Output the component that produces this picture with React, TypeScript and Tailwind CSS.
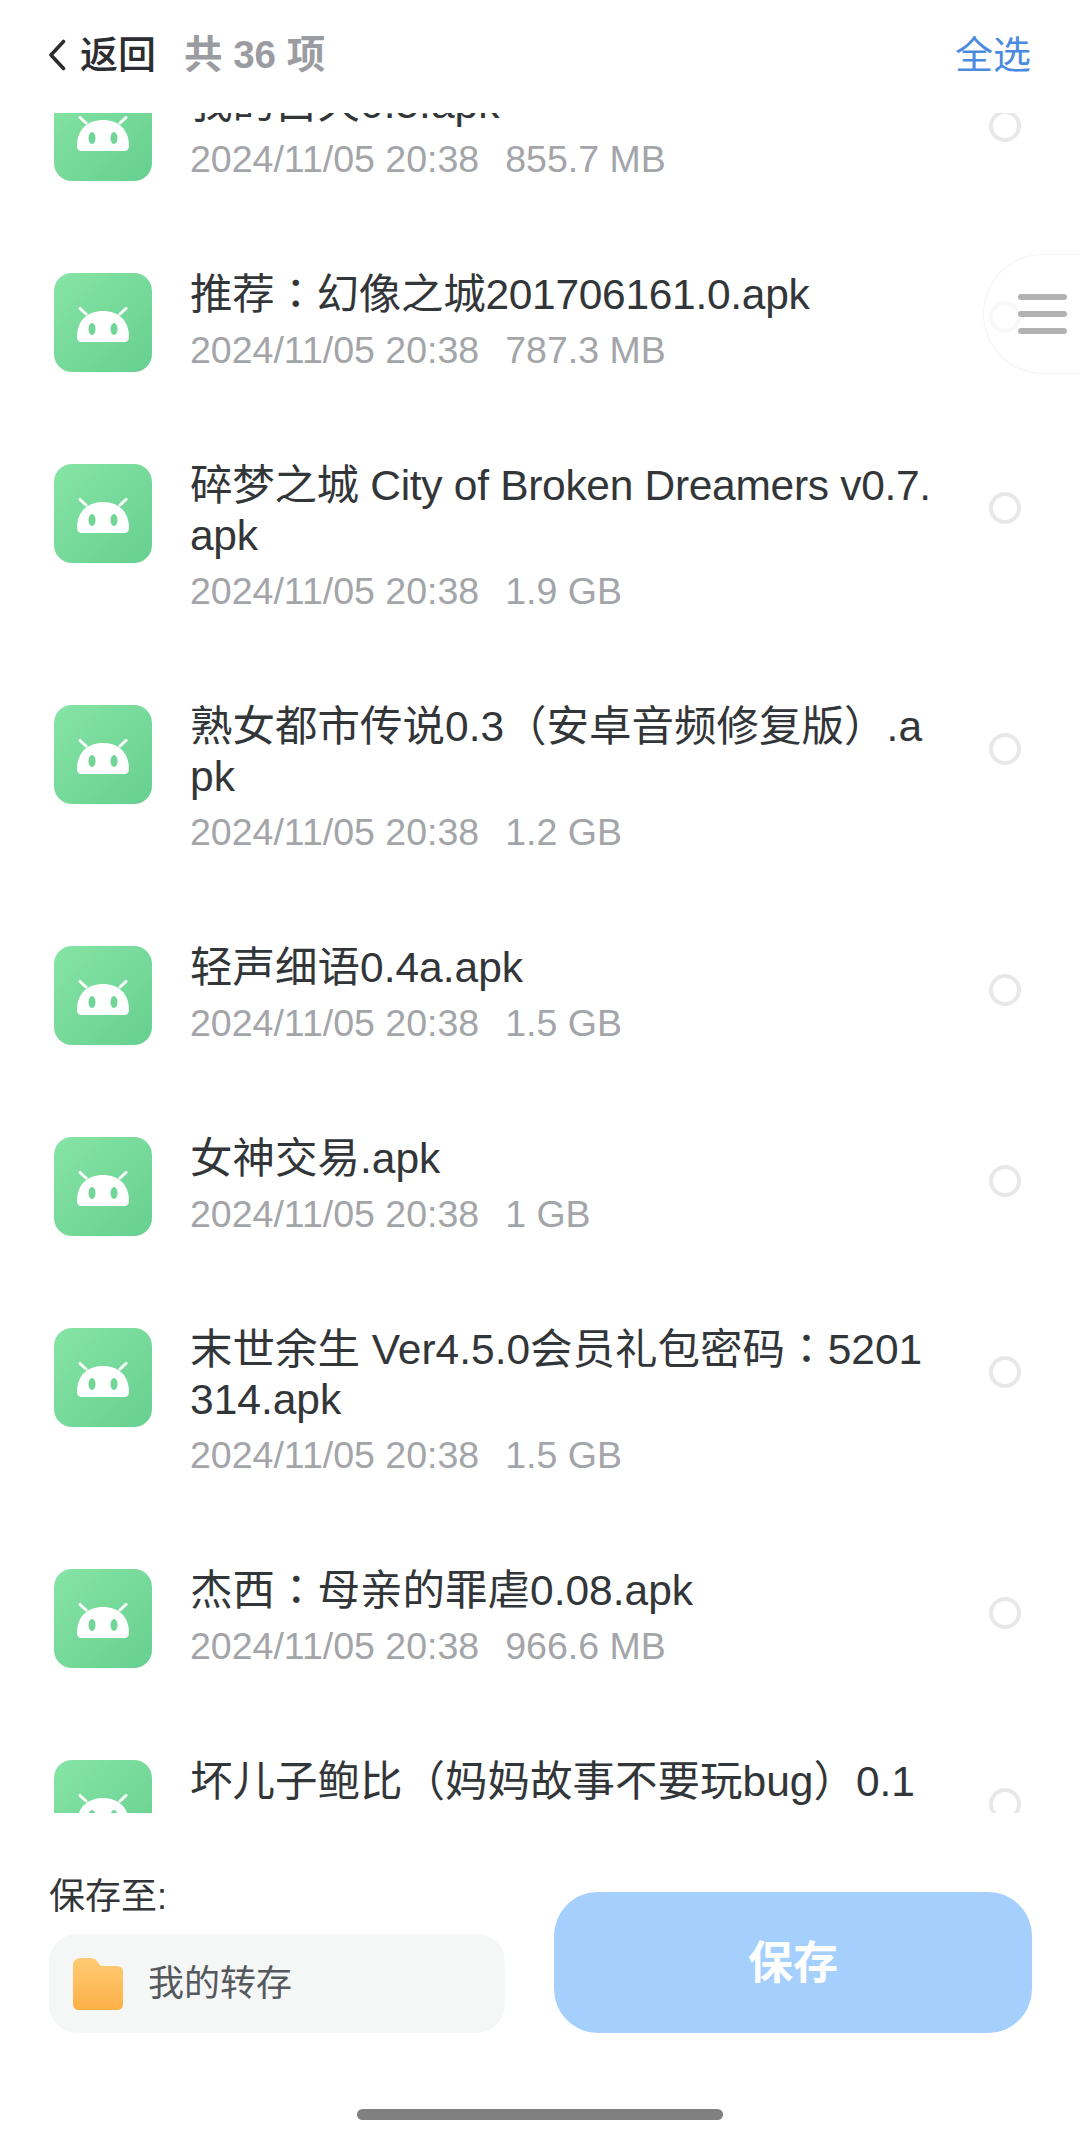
type FileRow = { lines: string[]; size: string; tracking?: string }

const FILES: FileRow[] = [
    { lines: ["我的白天0.5.apk"], size: "855.7 MB" },
    { lines: ["推荐：幻像之城201706161.0.apk"], size: "787.3 MB", tracking: "tracking-[-0.3px]" },
    { lines: ["碎梦之城 City of Broken Dreamers v0.7.", "apk"], size: "1.9 GB", tracking: "tracking-[-0.3px]" },
    { lines: ["熟女都市传说0.3（安卓音频修复版）.a", "pk"], size: "1.2 GB" },
    { lines: ["轻声细语0.4a.apk"], size: "1.5 GB" },
    { lines: ["女神交易.apk"], size: "1 GB" },
    { lines: ["末世余生 Ver4.5.0会员礼包密码：5201", "314.apk"], size: "1.5 GB" },
    { lines: ["杰西：母亲的罪虐0.08.apk"], size: "966.6 MB" },
    { lines: ["坏儿子鲍比（妈妈故事不要玩bug）0.1", ".apk"], size: "1.1 GB" },
]

const ApkIcon = () => (
    <div className="flex h-[99px] w-[98px] shrink-0 items-center justify-center rounded-[18px] bg-gradient-to-br from-[#86e5a5] to-[#66cf8f]">
        <svg className="mt-[4px]" width="54" height="36" viewBox="0 0 54 36" fill="none">
            <path d="M4 1.5 L10 7 M50 1.5 L44 7" stroke="white" strokeWidth="3" strokeLinecap="round" />
            <path d="M1 30 C1 13 12 4 27 4 C42 4 53 13 53 30 Q53 35 48 35 L6 35 Q1 35 1 30 Z" fill="white" />
            <ellipse cx="16" cy="22" rx="3.5" ry="6" fill="#6fd696" />
            <ellipse cx="38" cy="22" rx="3.5" ry="6" fill="#6fd696" />
        </svg>
    </div>
)

// the picture's full-width colon sits centred in its cell, as in the TC font
const Title = ({ text }: { text: string }) => (
    <p className="whitespace-nowrap text-[42.5px] leading-[50px] text-[#333639]">
        {text.split("：").map((part, i) => (
            <span key={part}>
                {i > 0 && <span className="font-['Noto_Sans_CJK_TC'] leading-[0]">：</span>}
                {part}
            </span>
        ))}
    </p>
)

const FileItem = ({ lines, size, tracking }: FileRow) => (
    <div className="flex items-start pl-[54px]">
        <ApkIcon />
        <div className={`ml-[38px] w-[750px] shrink-0 -mt-[3px] ${tracking ?? ""}`}>
            {lines.map((line) => (
                <Title key={line} text={line} />
            ))}
            <div className="mt-[5px] flex gap-[26px] text-[37.5px] leading-[50px] tracking-normal text-[#a3a5a9]">
                <span>2024/11/05 20:38</span>
                <span>{size}</span>
            </div>
        </div>
        <div className="ml-[49px] mt-[28px] size-[32px] shrink-0 rounded-full border-[4px] border-[#e8e8e8]" />
    </div>
)

export default function App() {
    return (
        <div className="relative flex h-[2140px] w-[1080px] flex-col overflow-hidden bg-white font-['Liberation_Sans','Noto_Sans_CJK_SC',sans-serif]">
            <header className="flex h-[113px] shrink-0 items-center justify-between pb-[3px] pl-[48px] pr-[49px]">
                <div className="flex items-center">
                    <svg width="18" height="32" viewBox="0 0 18 32" fill="none">
                        <path d="M15.5 2.5 L3 16 L15.5 29.5" stroke="#2b2d30" strokeWidth="3.6" strokeLinecap="round" strokeLinejoin="round" />
                    </svg>
                    <span className="ml-[14px] text-[38px] font-medium text-[#2b2d30]">返回</span>
                    <span className="ml-[28px] text-[38.5px] font-bold text-[#9b9ca1]">共 36 项</span>
                </div>
                <span className="text-[38px] text-[#4a8be0]">全选</span>
            </header>

            <div className="h-[1700px] shrink-0 overflow-hidden">
                <div className="-mt-[31px] flex flex-col gap-[89px]">
                    {FILES.map((file) => (
                        <FileItem key={file.lines[0]} {...file} />
                    ))}
                </div>
            </div>

            <footer className="flex items-end justify-between pl-[49px] pr-[48px] pt-[62px]">
                <div className="w-[456px]">
                    <p className="text-[36px] leading-[44px] text-[#333639]">保存至:</p>
                    <div className="mt-[15px] flex h-[99px] items-center rounded-[28px] bg-[#f5f6f6] pl-[24px]">
                        <svg width="50" height="52" viewBox="0 0 50 52">
                            <defs>
                                <linearGradient id="folderFill" x1="0" y1="0" x2="0" y2="1">
                                    <stop offset="0" stopColor="#fecb74" />
                                    <stop offset="1" stopColor="#feb148" />
                                </linearGradient>
                            </defs>
                            <path d="M0 8 Q0 0 8 0 L18 0 Q23 0 26 6 Q27 8 30 8 L44 8 Q50 8 50 14 L50 46 Q50 52 44 52 L6 52 Q0 52 0 46 Z" fill="url(#folderFill)" />
                        </svg>
                        <span className="ml-[25px] text-[36px] text-[#55585c]">我的转存</span>
                    </div>
                </div>
                <button className="flex h-[141px] w-[478px] items-center justify-center rounded-[44px] bg-[#a5cffc] pt-[3px] text-[45px] font-bold text-white">
                    保存
                </button>
            </footer>

            <div className="mx-auto mt-[76px] h-[11px] w-[366px] rounded-full bg-[#808080]" />

            <div className="absolute right-0 top-[254px] flex h-[120px] w-[97px] flex-col justify-center gap-[11px] rounded-l-[60px] border border-r-0 border-[#f3f3f3] bg-white/70 pl-[34px]">
                <div className="h-[6px] w-[49px] rounded-full bg-[#b2b2b2]" />
                <div className="h-[6px] w-[49px] rounded-full bg-[#b2b2b2]" />
                <div className="h-[6px] w-[49px] rounded-full bg-[#b2b2b2]" />
            </div>
        </div>
    )
}
